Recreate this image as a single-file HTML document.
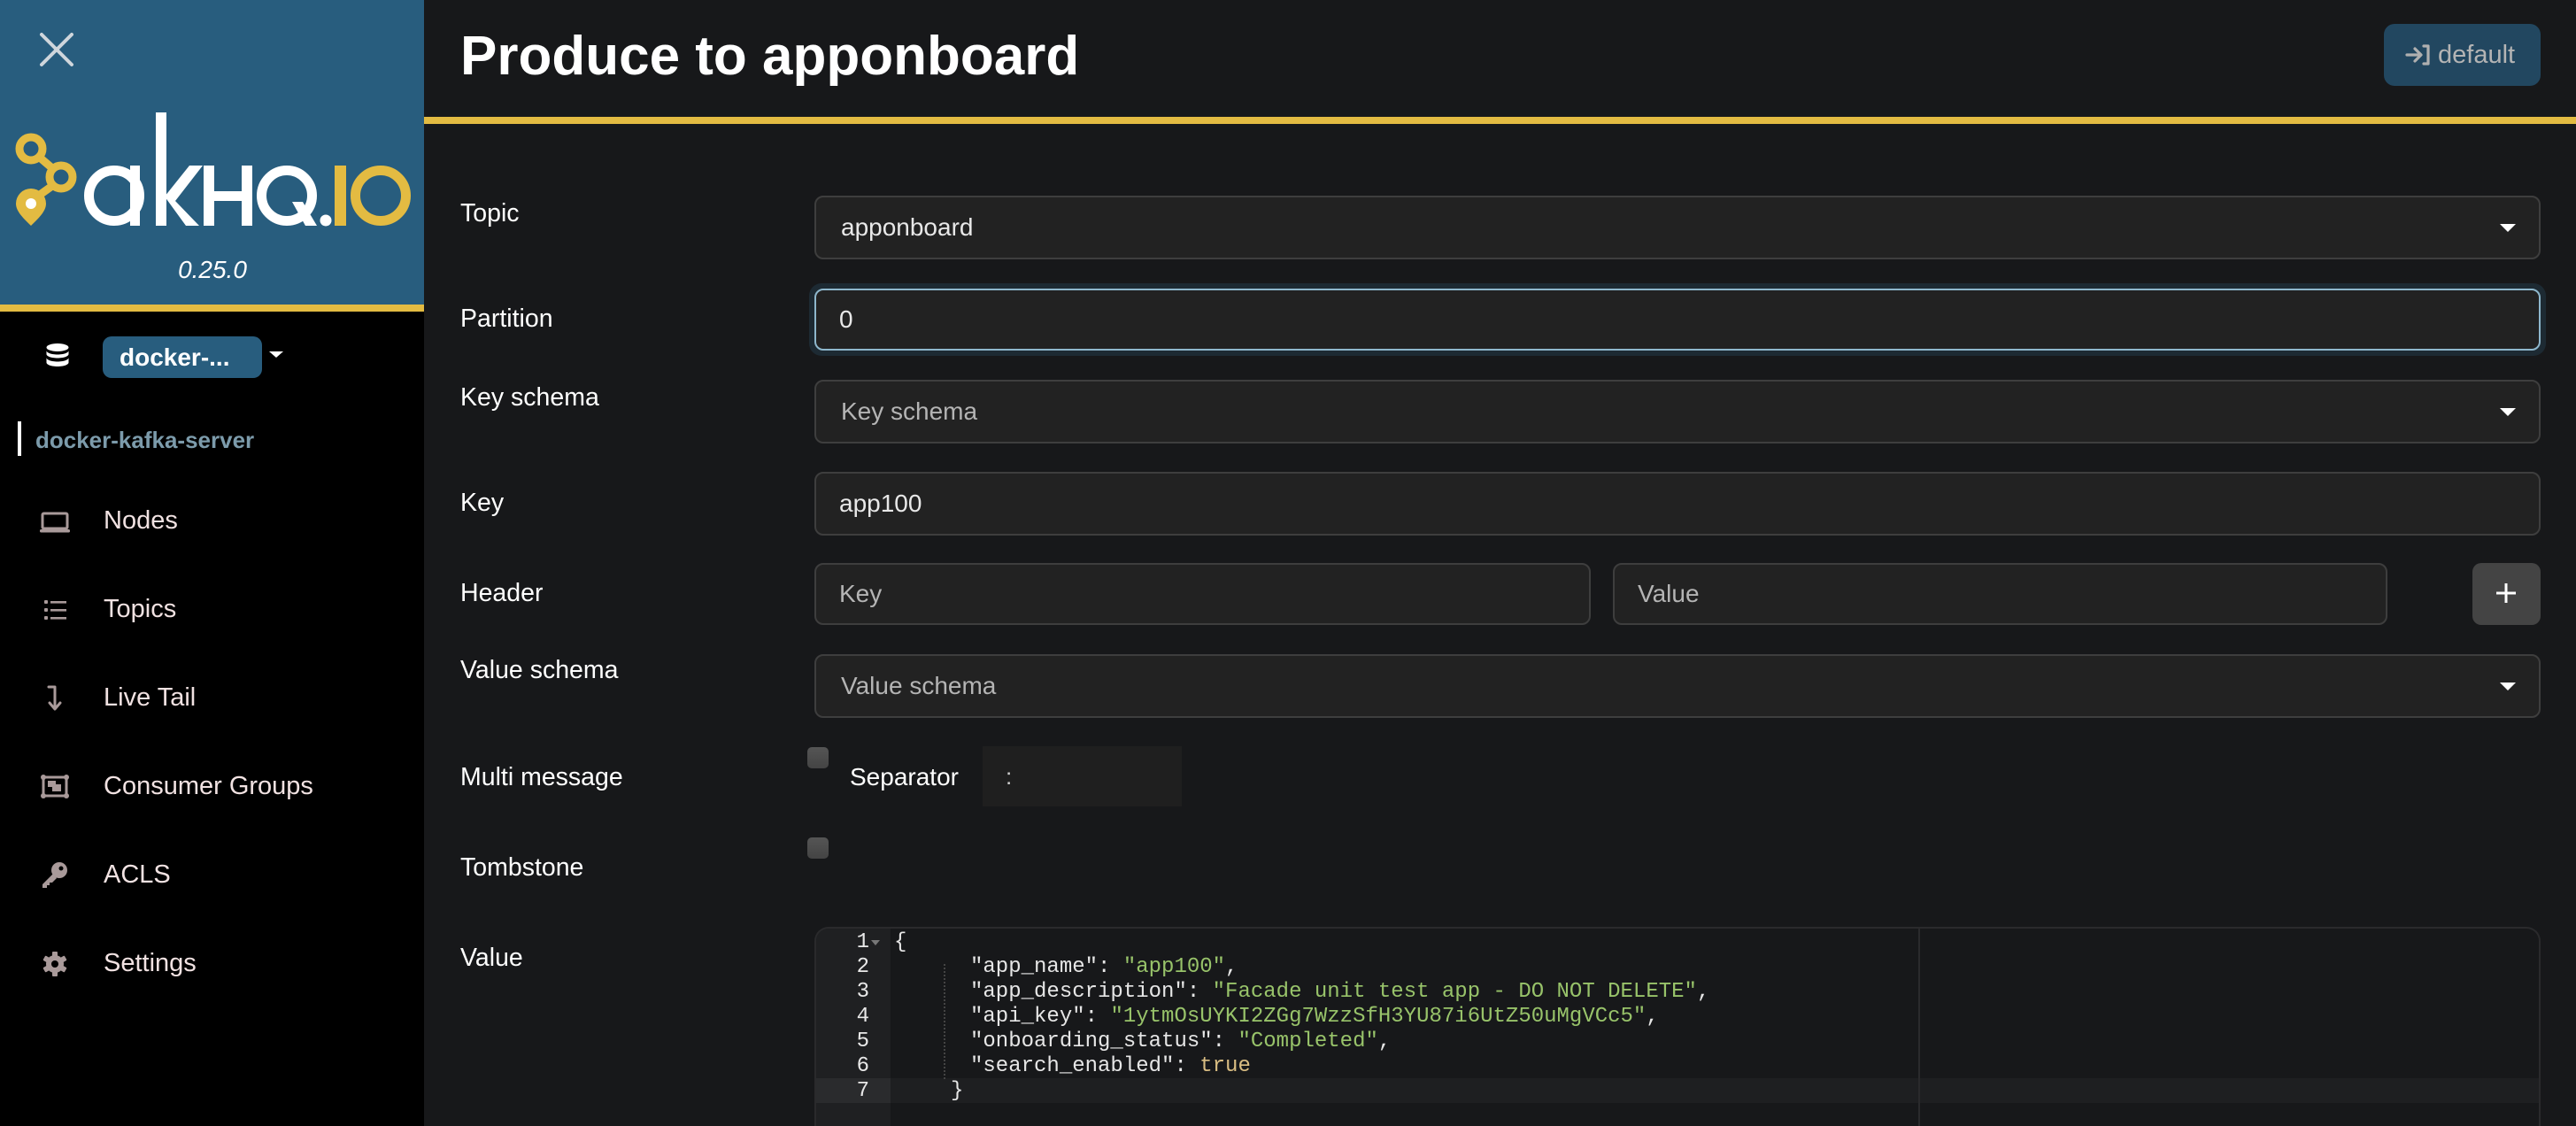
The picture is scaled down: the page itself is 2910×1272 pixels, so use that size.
<!DOCTYPE html>
<html><head><meta charset="utf-8">
<style>
*{box-sizing:border-box;margin:0;padding:0}
html,body{width:2910px;height:1272px;overflow:hidden;background:#17181a;font-family:"Liberation Sans",sans-serif;color:#fff}
.abs{position:absolute}
#side{position:absolute;left:0;top:0;width:479px;height:1272px;background:#000}
#brand{position:absolute;left:0;top:0;width:479px;height:344px;background:#285d7e}
#ybar{position:absolute;left:0;top:344px;width:479px;height:8px;background:#e3bb42}
.nav{position:absolute;left:117px;font-size:29px;color:#f1e2e2;line-height:34px}
.nic{position:absolute;left:44px;width:36px;height:36px}
.lbl{position:absolute;left:520px;font-size:28.5px;color:#fff;line-height:32px}
.inp{position:absolute;background:#222;border:2px solid #3e3e3e;border-radius:10px;font-size:28px;line-height:32px;color:#e8e8e8;padding-left:28px;display:flex;align-items:center}
.ph{color:#b4b4b4}
.caret{position:absolute;right:26px;top:50%;margin-top:-4px;width:0;height:0;border-left:9px solid transparent;border-right:9px solid transparent;border-top:9px solid #fff}
.cb{position:absolute;left:912px;width:24px;height:24px;border-radius:5px;background:linear-gradient(#555,#444)}
#code{position:absolute;left:920px;top:1047px;width:1950px;height:225px;border:2px solid #2a2a2c;border-bottom:none;border-radius:16px 16px 0 0;overflow:hidden;background:#17181a}
#gut{position:absolute;left:0;top:0;width:84px;height:100%;background:#1f2022}
.ln{position:absolute;left:0;width:60px;text-align:right;font-family:"Liberation Mono",monospace;font-size:24px;color:#e8e8e8;line-height:28px}
.cl{position:absolute;font-family:"Liberation Mono",monospace;font-size:24px;line-height:28px;color:#e6e6e6;white-space:pre}
.s{color:#98c36a}.t{color:#d9bd82}
</style></head><body>
<div id="side">
 <div id="brand">
  <svg class="abs" style="left:0;top:0" width="479" height="344" viewBox="0 0 479 344">
   <g stroke="#cfd6dc" stroke-width="4" stroke-linecap="round"><line x1="47" y1="39" x2="81" y2="73"/><line x1="81" y1="39" x2="47" y2="73"/></g>
   <g fill="none" stroke="#e3bb42" stroke-width="9">
    <circle cx="35" cy="168" r="13"/><circle cx="69" cy="200" r="13"/>
    <line x1="45" y1="178" x2="59" y2="190"/><line x1="59" y1="210" x2="45" y2="220"/>
   </g>
   <path d="M35 213 a17 17 0 0 1 17 17 c0 9 -9 17 -17 25 c-8 -8 -17 -16 -17 -25 a17 17 0 0 1 17 -17z" fill="#e3bb42"/>
   <circle cx="35" cy="230" r="6" fill="#fff"/>
   <g fill="none" stroke="#fff" stroke-width="11">
    <circle cx="129" cy="221" r="28.5"/>
    <circle cx="324" cy="221" r="28.5"/>
   </g>
   <rect x="147" y="187" width="11" height="68" fill="#fff"/>
   <rect x="176" y="127" width="12" height="128" fill="#fff"/>
   <polygon points="186,222 214,187 229,187 198,227 225,255 210,255" fill="#fff"/>
   <rect x="230" y="187" width="12" height="68" fill="#fff"/>
   <rect x="273" y="187" width="12" height="68" fill="#fff"/>
   <rect x="236" y="216" width="44" height="11" fill="#fff"/>
   <polygon points="330,228 342,228 358,255 345,255" fill="#fff"/>
   <circle cx="368" cy="249" r="6.5" fill="#fff"/>
   <rect x="378" y="187" width="13" height="68" fill="#e3bb42"/>
   <circle cx="430" cy="221" r="28.5" fill="none" stroke="#e3bb42" stroke-width="11"/>
   <text x="240" y="314" text-anchor="middle" font-family="Liberation Sans" font-style="italic" font-size="28" fill="#fff">0.25.0</text>
  </svg>
 </div>
 <div id="ybar"></div>
 <svg class="abs" style="left:52px;top:388px" width="26" height="28" viewBox="0 0 26 28"><g fill="#fff"><ellipse cx="13" cy="4.5" rx="12.5" ry="4.5"/><path d="M0.5 8v4c0 2.5 5.6 4.5 12.5 4.5S25.5 14.5 25.5 12V8c0 2.5-5.6 4.5-12.5 4.5S0.5 10.5 0.5 8z"/><path d="M0.5 16v5.5C0.5 24 6.1 26 13 26s12.5-2 12.5-4.5V16c0 2.5-5.6 4.5-12.5 4.5S0.5 18.5 0.5 16z"/></g></svg>
 <div class="abs" style="left:116px;top:380px;width:180px;height:47px;background:#285d7e;border-radius:10px;font-weight:bold;font-size:28px;line-height:47px;padding-left:19px;color:#fff">docker-...</div>
 <div class="abs" style="left:304px;top:397px;border-left:8px solid transparent;border-right:8px solid transparent;border-top:7px solid #fff"></div>
 <div class="abs" style="left:20px;top:476px;width:4px;height:39px;background:#fff"></div>
 <div class="abs" style="left:40px;top:481px;font-size:26px;font-weight:bold;color:#7c9bab;line-height:32px">docker-kafka-server</div>

 <svg class="nic" style="top:571px" viewBox="0 0 36 36"><g fill="none" stroke="#a99a9a" stroke-width="3"><rect x="4" y="9" width="28" height="17" rx="1.5"/></g><rect x="1" y="27" width="34" height="3.5" rx="1.5" fill="#a99a9a"/></svg>
 <div class="nav" style="top:571px">Nodes</div>
 <svg class="nic" style="top:671px" viewBox="0 0 36 36"><g fill="#a99a9a"><rect x="6" y="7" width="4" height="4" rx="1"/><rect x="6" y="16" width="4" height="4" rx="1"/><rect x="6" y="25" width="4" height="4" rx="1"/><rect x="13" y="8" width="18" height="2.6"/><rect x="13" y="17" width="18" height="2.6"/><rect x="13" y="26" width="18" height="2.6"/></g></svg>
 <div class="nav" style="top:671px">Topics</div>
 <svg class="nic" style="top:771px" viewBox="0 0 36 36"><g fill="none" stroke="#a99a9a" stroke-width="3" stroke-linecap="round" stroke-linejoin="round"><path d="M11 5h7v24"/><path d="M12 23l6 7 6-7"/></g></svg>
 <div class="nav" style="top:771px">Live Tail</div>
 <svg class="nic" style="top:871px" viewBox="0 0 36 36"><g fill="none" stroke="#a99a9a" stroke-width="3"><rect x="5" y="7" width="26" height="21"/></g><g fill="#a99a9a"><circle cx="5" cy="7" r="3"/><circle cx="31" cy="7" r="3"/><circle cx="5" cy="28" r="3"/><circle cx="31" cy="28" r="3"/><rect x="10" y="11" width="9" height="7"/><rect x="15" y="15" width="10" height="8"/></g></svg>
 <div class="nav" style="top:871px">Consumer Groups</div>
 <svg class="nic" style="top:971px" viewBox="0 0 36 36"><g fill="#a99a9a"><circle cx="23" cy="12" r="9"/><path d="M16 16l-12 12v4h5v-3h3v-3h3l5-5z"/></g><circle cx="25" cy="10" r="2.5" fill="#000"/></svg>
 <div class="nav" style="top:971px">ACLS</div>
 <svg class="nic" style="top:1071px" viewBox="0 0 36 36"><g fill="#a99a9a"><circle cx="18" cy="18" r="10"/><g><rect x="15" y="4" width="6" height="28" rx="1"/><rect x="15" y="4" width="6" height="28" rx="1" transform="rotate(60 18 18)"/><rect x="15" y="4" width="6" height="28" rx="1" transform="rotate(120 18 18)"/></g></g><circle cx="18" cy="18" r="4" fill="#000"/></svg>
 <div class="nav" style="top:1071px">Settings</div>
</div>

<div class="abs" style="left:520px;top:28px;font-size:62px;font-weight:bold;line-height:72px;color:#fff">Produce to apponboard</div>
<div class="abs" style="left:2693px;top:27px;width:177px;height:70px;background:#224760;border-radius:12px"></div>
<svg class="abs" style="left:2717px;top:48px" width="30" height="28" viewBox="0 0 30 28"><g fill="none" stroke="#b0b0b0" stroke-width="3.2" stroke-linecap="round" stroke-linejoin="round"><path d="M2 14h15M11 7l7 7-7 7"/><path d="M21 4h5v20h-5"/></g></svg>
<div class="abs" style="left:2754px;top:44px;font-size:29px;line-height:36px;color:#b4b4b4">default</div>
<div class="abs" style="left:479px;top:132px;width:2431px;height:8px;background:#e3bb42"></div>

<div class="lbl" style="top:225px">Topic</div>
<div class="inp" style="left:920px;top:221px;width:1950px;height:72px">apponboard<div class="caret"></div></div>
<div class="lbl" style="top:344px">Partition</div>
<div class="abs" style="left:914px;top:320px;width:1962px;height:82px;border-radius:14px;background:#1d2a33"></div>
<div class="inp" style="left:920px;top:326px;width:1950px;height:70px;border-color:#8eb7cc;padding-left:26px">0</div>
<div class="lbl" style="top:433px">Key schema</div>
<div class="inp" style="left:920px;top:429px;width:1950px;height:72px"><span class="ph">Key schema</span><div class="caret"></div></div>
<div class="lbl" style="top:552px">Key</div>
<div class="inp" style="left:920px;top:533px;width:1950px;height:72px;padding-left:26px">app100</div>
<div class="lbl" style="top:654px">Header</div>
<div class="inp" style="left:920px;top:636px;width:877px;height:70px;padding-left:26px"><span class="ph">Key</span></div>
<div class="inp" style="left:1822px;top:636px;width:875px;height:70px;padding-left:26px"><span class="ph">Value</span></div>
<div class="abs" style="left:2793px;top:636px;width:77px;height:70px;background:#444;border-radius:10px"></div>
<svg class="abs" style="left:2819px;top:658px" width="24" height="24" viewBox="0 0 24 24"><path d="M12 1v22M1 12h22" stroke="#fff" stroke-width="3"/></svg>
<div class="lbl" style="top:741px">Value schema</div>
<div class="inp" style="left:920px;top:739px;width:1950px;height:72px"><span class="ph">Value schema</span><div class="caret"></div></div>
<div class="lbl" style="top:862px">Multi message</div>
<div class="cb" style="top:844px"></div>
<div class="abs" style="left:960px;top:862px;font-size:28px;line-height:32px">Separator</div>
<div class="abs" style="left:1110px;top:843px;width:225px;height:68px;background:#1f1f1f;font-size:26px;line-height:68px;padding-left:26px;color:#ccc">:</div>
<div class="lbl" style="top:964px">Tombstone</div>
<div class="cb" style="top:946px"></div>
<div class="lbl" style="top:1066px">Value</div>

<div id="code">
 <div id="gut"></div>
 <div class="abs" style="left:0;top:169px;width:1950px;height:28px;background:#1e1f21"></div>
 <div class="abs" style="left:0;top:169px;width:84px;height:28px;background:#2a2b2d"></div>
 <div class="abs" style="left:1245px;top:0;width:2px;height:240px;background:#2a2a2c"></div>
 <div class="abs" style="left:144px;top:40px;width:0;height:130px;border-left:2px dotted #444"></div>
 <div class="abs" style="left:62px;top:13px;border-left:5px solid transparent;border-right:5px solid transparent;border-top:6px solid #777"></div>
 <div class="ln" style="top:2px">1</div><div class="ln" style="top:30px">2</div><div class="ln" style="top:58px">3</div><div class="ln" style="top:86px">4</div><div class="ln" style="top:114px">5</div><div class="ln" style="top:142px">6</div><div class="ln" style="top:170px">7</div>
 <div class="cl" style="left:88px;top:2px">{</div>
 <div class="cl" style="left:174px;top:30px">"app_name": <span class="s">"app100"</span>,</div>
 <div class="cl" style="left:174px;top:58px">"app_description": <span class="s">"Facade unit test app - DO NOT DELETE"</span>,</div>
 <div class="cl" style="left:174px;top:86px">"api_key": <span class="s">"1ytmOsUYKI2ZGg7WzzSfH3YU87i6UtZ50uMgVCc5"</span>,</div>
 <div class="cl" style="left:174px;top:114px">"onboarding_status": <span class="s">"Completed"</span>,</div>
 <div class="cl" style="left:174px;top:142px">"search_enabled": <span class="t">true</span></div>
 <div class="cl" style="left:152px;top:170px">}</div>
</div>
</body></html>
